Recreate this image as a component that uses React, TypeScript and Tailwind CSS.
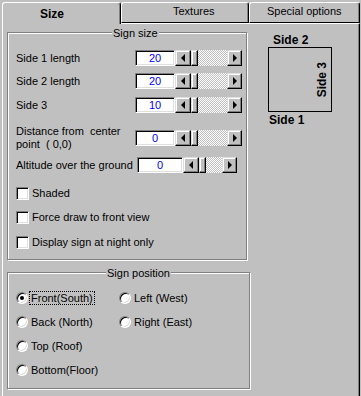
import React from 'react'

const raised =
  'border border-t-[#dfdfdf] border-l-[#dfdfdf] border-r-black border-b-black shadow-[inset_-1px_-1px_0_#808080,inset_1px_1px_0_#fff]'
const sunken =
  'border border-t-[#808080] border-l-[#808080] border-r-white border-b-white shadow-[inset_1px_1px_0_#000,inset_-1px_-1px_0_#dfdfdf]'
const etched = 'border border-[#808080] shadow-[inset_1px_1px_0_#fff,1px_1px_0_#fff]'

function ScrollBar({ width, track }: { width: string; track: string }) {
  return (
    <div className={`flex h-4 ${width}`}>
      <div className={`w-4 h-4 bg-[#c0c0c0] flex items-center justify-center ${raised}`}>
        <div className="w-0 h-0 border-y-[4px] border-y-transparent border-r-[4px] border-r-black" />
      </div>
      <div className={`w-[7px] h-4 bg-[#c0c0c0] ${raised}`} />
      <div className={`${track} h-4 bg-[image:repeating-conic-gradient(#fff_0_25%,#c0c0c0_0_50%)] bg-[length:2px_2px]`} />
      <div className={`w-[15px] h-4 bg-[#c0c0c0] flex items-center justify-center ${raised}`}>
        <div className="w-0 h-0 border-y-[4px] border-y-transparent border-l-[4px] border-l-black" />
      </div>
    </div>
  )
}

function Spin({ value, edit, track, width }: { value: string; edit: string; track: string; width: string }) {
  return (
    <div className="flex">
      <div className={`${edit} h-4 bg-white text-[#0000ff] text-center leading-[14px] ${sunken}`}>{value}</div>
      <ScrollBar width={width} track={track} />
    </div>
  )
}

function Check({ label, mt }: { label: string; mt: string }) {
  return (
    <div className={`flex items-center h-[13px] ${mt}`}>
      <div className={`w-[13px] h-[13px] bg-white ${sunken}`} />
      <span className="ml-[3px]">{label}</span>
    </div>
  )
}

function Radio({ label, checked }: { label: string; checked?: boolean }) {
  return (
    <div className="flex items-center h-3">
      <div className={`w-3 h-3 rounded-full bg-white flex items-center justify-center ${sunken}`}>
        {checked && <div className="w-1 h-1 rounded-full bg-black" />}
      </div>
      <span
        className={`ml-px px-px leading-[12px] border border-dotted ${checked ? 'border-black' : 'border-transparent'}`}
      >
        {label}
      </span>
    </div>
  )
}

export default function App() {
  return (
    <div className="w-[361px] h-[396px] overflow-hidden bg-[#c0c0c0] text-black text-[11px] leading-[13px] font-['Liberation_Sans',Arial,sans-serif] flex flex-col">
      {/* tabs */}
      <div className="flex h-[23px] pl-[2px] pt-[2px] shrink-0">
        <div className="relative z-10 w-[119px] h-[22px] bg-[#c0c0c0] border-t border-l border-white border-r border-r-black rounded-t-[3px] shadow-[inset_-1px_0_0_#808080] pl-[37px] pt-[4px] font-bold text-[12px] leading-[14px]">
          Size
        </div>
        <div className="w-[128px] h-[21px] border-t border-l border-white border-r border-r-black border-b border-b-black rounded-t-[3px] shadow-[inset_-1px_0_0_#808080] pl-[51px] pt-[2px]">
          Textures
        </div>
        <div className="w-[111px] h-[21px] border-t border-l border-white border-r border-r-black border-b border-b-black rounded-t-[3px] shadow-[inset_-1px_0_0_#808080] pl-[17px] pt-[2px]">
          Special options
        </div>
      </div>

      {/* page */}
      <div className="ml-[2px] w-[358px] flex-1 border-t border-l border-white border-r border-r-black shadow-[inset_-1px_0_0_#808080] flex pl-[4px] pt-[8px]">
        <div className="w-[244px] flex flex-col">
          {/* Sign size */}
          <div className={`relative w-[240px] h-[228px] ${etched} pl-[8px] pt-[17px]`}>
            <span className="absolute left-[104px] -top-[6px] px-[1px] bg-[#c0c0c0]">Sign size</span>
            <div className="flex items-center h-4">
              <span className="w-[119px]">Side 1 length</span>
              <Spin value="20" edit="w-[40px]" track="w-[29px]" width="w-[67px]" />
            </div>
            <div className="flex items-center h-4 mt-[7px]">
              <span className="w-[119px]">Side 2 length</span>
              <Spin value="20" edit="w-[40px]" track="w-[29px]" width="w-[67px]" />
            </div>
            <div className="flex items-center h-4 mt-[8px]">
              <span className="w-[119px]">Side 3</span>
              <Spin value="10" edit="w-[40px]" track="w-[29px]" width="w-[67px]" />
            </div>
            <div className="flex items-center h-4 mt-[17px]">
              <span className="w-[119px] whitespace-pre">{'Distance from  center\npoint  ( 0,0)'}</span>
              <Spin value="0" edit="w-[40px]" track="w-[29px]" width="w-[67px]" />
            </div>
            <div className="flex items-center h-4 mt-[11px]">
              <span className="w-[121px]">Altitude over the ground</span>
              <Spin value="0" edit="w-[46px]" track="w-[16px]" width="w-[54px]" />
            </div>
            <Check label="Shaded" mt="mt-[14px]" />
            <Check label="Force draw to front view" mt="mt-[11px]" />
            <Check label="Display sign at night only" mt="mt-[12px]" />
          </div>

          {/* Sign position */}
          <div className={`relative mt-[12px] w-[243px] h-[117px] ${etched} pl-[8px] pt-[19px]`}>
            <span className="absolute left-[98px] -top-[6px] px-[1px] bg-[#c0c0c0]">Sign position</span>
            <div className="grid grid-cols-[103px_1fr] gap-y-[12px]">
              <Radio label="Front(South)" checked />
              <Radio label="Left (West)" />
              <Radio label="Back (North)" />
              <Radio label="Right (East)" />
              <Radio label="Top (Roof)" />
              <div />
              <Radio label="Bottom(Floor)" />
            </div>
          </div>
        </div>

        {/* diagram */}
        <div className="ml-[17px] mt-[1px] flex flex-col font-bold text-[12px] leading-[14px]">
          <span className="ml-[5px]">Side 2</span>
          <div className="w-[64px] h-[65px] border border-black flex items-center justify-end pr-[2px]">
            <span className="[writing-mode:vertical-rl] rotate-180">Side 3</span>
          </div>
          <span className="ml-[1px] mt-[1px]">Side 1</span>
        </div>
      </div>
    </div>
  )
}
